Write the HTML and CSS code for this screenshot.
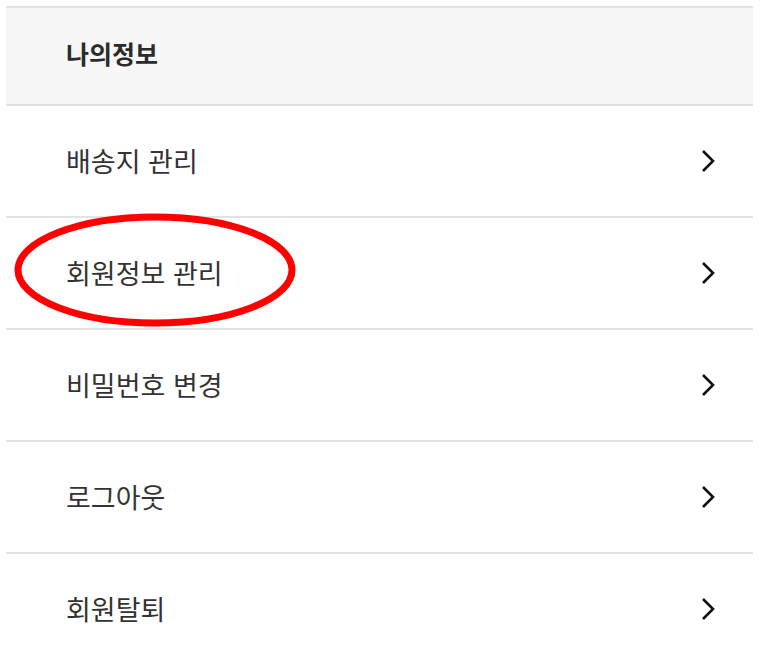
FILE: index.html
```html
<!DOCTYPE html>
<html lang="ko">
<head>
    <meta charset="utf-8">
    <title>나의정보</title>
    <link rel="stylesheet" href="styles.css">
</head>
<body>
    <div class="menu">
        <div class="menu-title">나의정보</div>
        <ul class="menu-list">
            <li class="menu-item"><span>배송지 관리</span><svg class="chevron" viewBox="0 0 16 24"><path d="M3 2 L13 12 L3 22"/></svg></li>
            <li class="menu-item marked">
                <span>회원정보 관리</span><svg class="chevron" viewBox="0 0 16 24"><path d="M3 2 L13 12 L3 22"/></svg>
                <svg class="circle" viewBox="0 0 290 120"><ellipse cx="145" cy="60" rx="137" ry="53"/></svg>
            </li>
            <li class="menu-item"><span>비밀번호 변경</span><svg class="chevron" viewBox="0 0 16 24"><path d="M3 2 L13 12 L3 22"/></svg></li>
            <li class="menu-item"><span>로그아웃</span><svg class="chevron" viewBox="0 0 16 24"><path d="M3 2 L13 12 L3 22"/></svg></li>
            <li class="menu-item"><span>회원탈퇴</span><svg class="chevron" viewBox="0 0 16 24"><path d="M3 2 L13 12 L3 22"/></svg></li>
        </ul>
    </div>
</body>
</html>
```

FILE: styles.css
```css
body {
    margin: 0;
    padding: 6px 9px 0 6px;
    background: #fff;
    font-family: "Noto Sans CJK KR", "Noto Sans", sans-serif;
    color: #333;
}

.menu {
    border-top: 2px solid #e4e4e4;
}

.menu-title {
    height: 98px;
    box-sizing: border-box;
    display: flex;
    align-items: center;
    padding: 0 0 6px 60px;
    background: #f7f7f7;
    border-bottom: 2px solid #e0e0e0;
    font-size: 25px;
    font-weight: bold;
    color: #2b2b2b;
}

.menu-list {
    list-style: none;
    margin: 0;
    padding: 0;
}

.menu-item {
    position: relative;
    height: 110px;
    display: flex;
    align-items: center;
    justify-content: space-between;
    padding: 0 37px 0 60px;
    border-bottom: 2px solid #e3e3e3;
    font-size: 27px;
}

.menu-item span {
    margin-bottom: 2px;
}

.menu-item:last-child {
    border-bottom: none;
}

.chevron {
    width: 16px;
    height: 24px;
    fill: none;
    stroke: #111;
    stroke-width: 2.6;
}

.circle {
    position: absolute;
    left: 4px;
    top: -8px;
    width: 290px;
    height: 120px;
    fill: none;
    stroke: #f00;
    stroke-width: 7;
}
```
